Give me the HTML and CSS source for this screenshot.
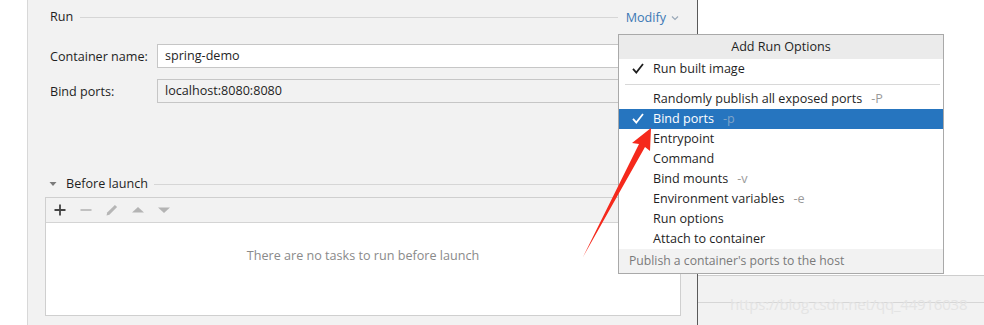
FILE: index.html
```html
<!DOCTYPE html>
<html lang="en">
<head>
<meta charset="utf-8">
<title>Run configuration</title>
<link rel="stylesheet" href="styles.css">
</head>
<body>
<div class="page">
  <div class="strip"></div>
  <div class="main">
    <div class="section-head">
      <span class="title">Run</span>
      <span class="rule"></span>
      <span class="modify">Modify<svg class="chev" width="8" height="6" viewBox="0 0 8 6"><path d="M1 1.5 L4 4.5 L7 1.5" fill="none" stroke="#9aa9b8" stroke-width="1.2"/></svg></span>
    </div>
    <div class="form">
      <div class="row"><span class="label">Container name:</span><div class="input">spring-demo</div></div>
      <div class="row"><span class="label">Bind ports:</span><div class="input ro">localhost:8080:8080</div></div>
    </div>
    <div class="before-head">
      <svg class="tri" width="8" height="6" viewBox="0 0 8 6"><path d="M0.5 1 L7.5 1 L4 5 Z" fill="#7a7a7a"/></svg>
      <span class="title">Before launch</span>
      <span class="rule"></span>
    </div>
    <div class="tasks">
      <div class="toolbar">
        <svg class="tb" width="14" height="14" viewBox="0 0 14 14"><path d="M7 1.5 V12.5 M1.5 7 H12.5" stroke="#444444" stroke-width="1.8"/></svg>
        <svg class="tb" width="14" height="14" viewBox="0 0 14 14"><path d="M1.5 7 H12.5" stroke="#b4b4b4" stroke-width="1.6"/></svg>
        <svg class="tb" width="14" height="14" viewBox="0 0 14 14"><path d="M1.5 12.5 L2.2 9.6 L9.9 1.9 L12.1 4.1 L4.4 11.8 Z" fill="#b6b6b6"/></svg>
        <svg class="tb" width="14" height="14" viewBox="0 0 14 14"><path d="M1 9.5 L7 4 L13 9.5 Z" fill="#b4b4b4"/></svg>
        <svg class="tb" width="14" height="14" viewBox="0 0 14 14"><path d="M1 4.5 L7 10 L13 4.5 Z" fill="#b4b4b4"/></svg>
      </div>
      <div class="empty">There are no tasks to run before launch</div>
    </div>
  </div>
  <div class="side">
    <div class="side-top"></div>
    <div class="side-bottom"><div class="side-line"></div></div>
  </div>

  <div class="popup">
    <div class="popup-head">Add Run Options</div>
    <div class="item"><svg class="check" width="12" height="11" viewBox="0 0 12 11"><path d="M1 5.8 L4.3 9.5 L11 1" fill="none" stroke="#1e1e1e" stroke-width="1.8"/></svg>Run built image</div>
    <div class="sep"></div>
    <div class="item">Randomly publish all exposed ports<span class="flag">-P</span></div>
    <div class="item selected"><svg class="check" width="12" height="11" viewBox="0 0 12 11"><path d="M1 5.8 L4.3 9.5 L11 1" fill="none" stroke="#ffffff" stroke-width="1.8"/></svg>Bind ports<span class="flag">-p</span></div>
    <div class="item">Entrypoint</div>
    <div class="item">Command</div>
    <div class="item">Bind mounts<span class="flag">-v</span></div>
    <div class="item">Environment variables<span class="flag">-e</span></div>
    <div class="item">Run options</div>
    <div class="item">Attach to container</div>
    <div class="popup-foot">Publish a container's ports to the host</div>
  </div>

  <svg class="arrow" width="984" height="325" viewBox="0 0 984 325">
    <path d="M651 128 L632 143 L639 144 L583 257 L645 147 L650 151 Z" fill="#f5291c"/>
  </svg>

  <div class="watermark">https://blog.csdn.net/qq_44916038</div>
</div>
</body>
</html>
```

FILE: styles.css
```css
* { box-sizing: border-box; }

html, body {
  margin: 0;
  padding: 0;
  background: #ffffff;
}

body {
  font-family: "Open Sans", "Noto Sans", sans-serif;
  font-size: 12.6px;
  color: #1f1f1f;
}

.page {
  position: relative;
  width: 984px;
  height: 325px;
  display: flex;
  overflow: hidden;
}

.strip {
  width: 28px;
  border-right: 1px solid #d8d8d8;
  background: #ffffff;
}

.main {
  width: 670px;
  background: #f2f2f2;
  border-right: 1px solid #5a5a5a;
  padding: 7px 16px 0 17px;
  display: flex;
  flex-direction: column;
}

.section-head {
  height: 20px;
  display: flex;
  align-items: center;
  padding-left: 5px;
}

.title {
  line-height: 20px;
  white-space: nowrap;
}

.rule {
  flex: 1;
  height: 1px;
  background: #d6d6d6;
  margin: 1px 8px 0 7px;
}

.modify {
  color: #3b78b5;
  display: flex;
  align-items: center;
  gap: 5px;
  margin-right: 2px;
}

.chev { display: block; margin-top: 1px; }

.form {
  margin-top: 17px;
  padding-left: 5px;
  display: flex;
  flex-direction: column;
  gap: 11px;
}

.row {
  display: flex;
  align-items: center;
  height: 24px;
}

.label {
  width: 107px;
  white-space: nowrap;
}

.input {
  flex: 1;
  height: 24px;
  border: 1px solid #c6c6c6;
  background: #ffffff;
  padding-left: 7px;
  line-height: 22px;
}

.input.ro {
  background: #f2f2f2;
}

.before-head {
  margin-top: 71px;
  height: 20px;
  display: flex;
  align-items: center;
  padding-left: 4px;
}

.tri { display: block; margin-right: 9px; }

.before-head .rule { margin-left: 6px; margin-right: 0; }

.tasks {
  margin-top: 3px;
  height: 119px;
  border: 1px solid #cfcfcf;
  background: #ffffff;
  display: flex;
  flex-direction: column;
}

.toolbar {
  height: 25px;
  background: #f2f2f2;
  border-bottom: 1px solid #d4d4d4;
  display: flex;
  align-items: center;
  gap: 12px;
  padding-left: 7px;
}

.tb { display: block; }

.empty {
  flex: 1;
  display: flex;
  justify-content: center;
  padding-top: 23px;
  color: #8a8a8a;
  line-height: 20px;
}

.side {
  flex: 1;
  display: flex;
  flex-direction: column;
}

.side-top {
  height: 275px;
  background: #ffffff;
}

.side-bottom {
  flex: 1;
  background: #f2f2f2;
  border-top: 1px solid #cdcdcd;
  padding-top: 26px;
}

.side-line {
  height: 1px;
  background: #d6d6d6;
}

/* Popup menu */
.popup {
  position: absolute;
  left: 618px;
  top: 34px;
  width: 326px;
  border: 1px solid #a9a9a9;
  background: #ffffff;
}

.popup-head {
  height: 24px;
  line-height: 24px;
  background: #ebebeb;
  text-align: center;
  color: #1f1f1f;
}

.item {
  position: relative;
  height: 20px;
  line-height: 20px;
  padding-left: 34px;
  white-space: nowrap;
}

.item .check {
  position: absolute;
  left: 13px;
  top: 4px;
}

.flag {
  color: #9a9a9a;
  margin-left: 9px;
}

.item.selected {
  background: #2675bf;
  color: #ffffff;
}

.item.selected .flag {
  color: #7ea3c9;
}

.sep {
  height: 10px;
  position: relative;
}

.sep::after {
  content: "";
  position: absolute;
  left: 6px;
  right: 3px;
  top: 5px;
  height: 1px;
  background: #d8d8d8;
}

.popup-foot {
  height: 24px;
  line-height: 24px;
  background: #f2f2f2;
  color: #7a7a7a;
  padding-left: 10px;
  font-size: 12.2px;
}

.arrow {
  position: absolute;
  left: 0;
  top: 0;
  pointer-events: none;
}

.watermark {
  position: absolute;
  left: 730px;
  top: 294px;
  font-size: 15px;
  color: #e4e4e4;
  white-space: nowrap;
  letter-spacing: -0.2px;
}
```
